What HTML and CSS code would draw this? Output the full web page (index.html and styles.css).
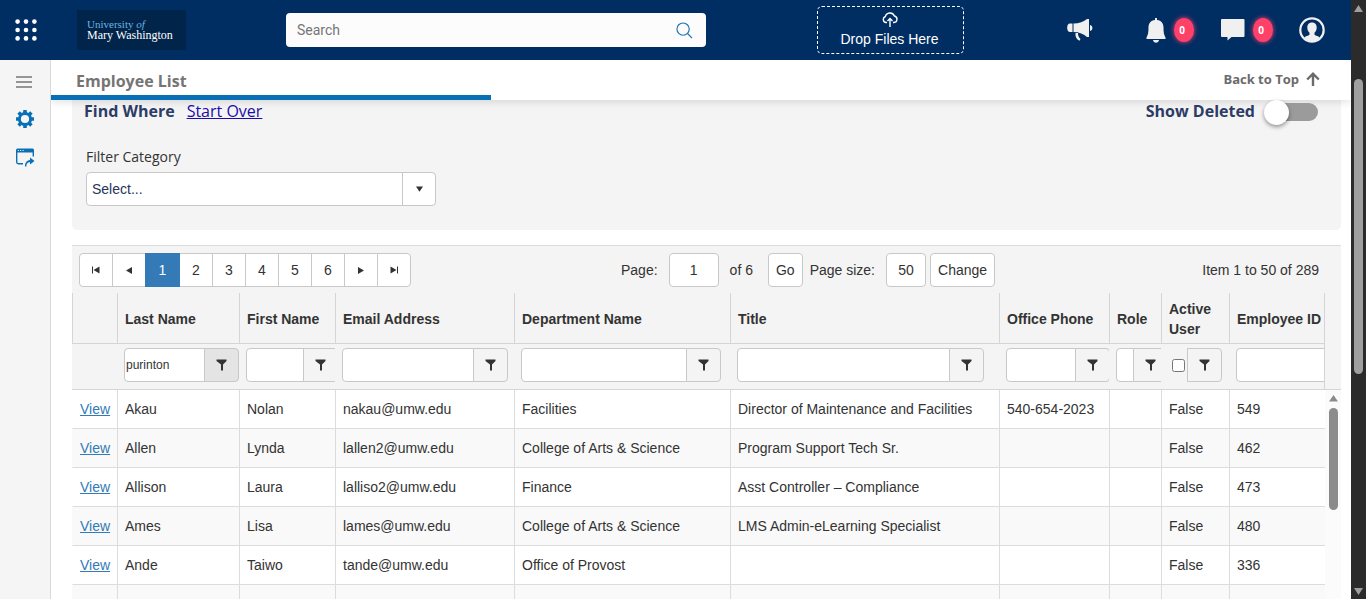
FILE: index.html
```html
<!DOCTYPE html>
<html lang="en">

<head>
    <meta charset="UTF-8">
    <meta name="viewport" content="width=device-width, initial-scale=1.0">
    <title>Employee List</title>

    <link rel="stylesheet" href="styles.css">
</head>

<body>

    <svg class="sprite" aria-hidden="true">
        <symbol id="funnel" viewBox="0 0 12 12">
            <path d="M0.500 0.500h10v1.500L7 5.500v6h-2v-6L0.500 2z" />
        </symbol>
    </svg>

    <div class="app">
        <header class="topbar">
            <button class="icon-btn apps-btn" aria-label="Apps">
                <svg width="22" height="22" viewBox="0 0 22 22" fill="#fff">
                    <circle cx="2.600" cy="2.600" r="2.300" /><circle cx="11" cy="2.600" r="2.300" /><circle cx="19.400" cy="2.600" r="2.300" />
                    <circle cx="2.600" cy="11" r="2.300" /><circle cx="11" cy="11" r="2.300" /><circle cx="19.400" cy="11" r="2.300" />
                    <circle cx="2.600" cy="19.400" r="2.300" /><circle cx="11" cy="19.400" r="2.300" /><circle cx="19.400" cy="19.400" r="2.300" />
                </svg>
            </button>

            <a href="#" class="logo">
                <span class="logo-top">University <i>of</i></span>
                <span>Mary Washington</span>
            </a>

            <div class="search">
                <input type="text" placeholder="Search" aria-label="Search">
                <button class="icon-btn" aria-label="Run search">
                    <svg width="17" height="17" viewBox="0 0 18 18" fill="none" stroke="#1a73b5" stroke-width="1.200">
                        <circle cx="7.500" cy="7.500" r="6.500" />
                        <path d="M12.200 12.200L17 17" />
                    </svg>
                </button>
            </div>

            <button class="drop-files">
                <svg width="16" height="15" viewBox="0 0 16 15" fill="none" stroke="#fff" stroke-width="1.400">
                    <path d="M5 10.500H4A3 3 0 0 1 3.300 4.700A4.800 4.800 0 0 1 12.400 4A3.300 3.300 0 0 1 12 10.500H11" />
                    <path d="M8 15V6.500M5.500 9L8 6.500L10.500 9" />
                </svg>
                <span>Drop Files Here</span>
            </button>

            <div class="actions">
                <button class="icon-btn news" aria-label="Announcements">
                    <svg width="26" height="22" viewBox="0 0 26 22" fill="#f0f0f0">
                        <path d="M3 4.500H5.500v8.500H3C-0.800 13 -0.800 4.500 3 4.500z" />
                        <path d="M6.500 4.500C12 4.500 17 2.500 20 0h2v18H20C17 15 12 13 6.500 13z" />
                        <path d="M23 6C26.200 6.500 26.200 11.500 23 12z" />
                        <path d="M8.500 14h2.500c0 3 0.800 4 2.500 6l-1 1.700C9.500 20.500 8 17.500 8.500 14z" />
                    </svg>
                </button>
                <button class="icon-btn bell" aria-label="Notifications">
                    <svg width="20" height="25" viewBox="0 0 20 25" fill="#f0f0f0">
                        <path d="M9 2V0h2v2c4.500 0.500 6.500 3.500 6.500 7.500c0 5 0.500 7.500 2 10v1.500H0.500v-1.500C2 17 2.500 14.500 2.500 9.500C2.500 5.500 4.500 2.500 9 2z" />
                        <path d="M7 22h6c-0.500 3.600-5.500 3.600-6 0z" />
                    </svg>
                    <span class="badge">0</span>
                </button>
                <button class="icon-btn chat" aria-label="Messages">
                    <svg width="24" height="22" viewBox="0 0 24 22" fill="#f0f0f0">
                        <path d="M1 0h21.500a1 1 0 0 1 1 1v16a1 1 0 0 1-1 1H10.500L6.500 21.500V18H1A1 1 0 0 1 0 17v-16A1 1 0 0 1 1 0z" />
                    </svg>
                    <span class="badge">0</span>
                </button>
                <button class="icon-btn user" aria-label="Profile">
                    <svg width="26" height="26" viewBox="0 0 26 26">
                        <circle cx="13" cy="13" r="11.700" fill="none" stroke="#f0f0f0" stroke-width="2.200" />
                        <path d="M13 5.500c3.200 0 4.700 2.200 4.700 5c0 2.500-1 4.200-2.200 5.200v2c1.500 1 3.700 1.300 5.200 2.800C18.500 23 16 24.500 13 24.500s-5.500-1.500-7.700-4c1.500-1.500 3.700-1.800 5.200-2.800v-2C9.300 14.700 8.300 13 8.300 10.500C8.300 7.700 9.800 5.500 13 5.500z" fill="#f0f0f0" />
                    </svg>
                </button>
            </div>
        </header>

        <div class="layout">
            <nav class="sidebar">
                <button class="icon-btn" aria-label="Menu">
                    <svg width="16" height="12" viewBox="0 0 16 12" stroke="#757575" stroke-width="1.400">
                        <path d="M0 1h16M0 6h16M0 11h16" />
                    </svg>
                </button>
                <a href="#" aria-label="Settings">
                    <svg width="18" height="18" viewBox="0 0 18 18" stroke="#0a70b5">
                        <circle cx="9" cy="9" r="5.600" fill="none" stroke-width="3" />
                        <path d="M9 0v3.500M9 14.500v3.500M0 9h3.500M14.500 9h3.500M2.600 2.600l2.500 2.500M12.900 12.900l2.500 2.500M15.400 2.600l-2.500 2.500M5.100 12.900l-2.500 2.500" stroke-width="3.600" />
                    </svg>
                </a>
                <a href="#" aria-label="Open form">
                    <svg width="19" height="19" viewBox="0 0 19 19" fill="none" stroke="#0a70b5" stroke-width="1.400">
                        <path d="M1.500 0.500h15a1.500 1.500 0 0 1 1.500 1.500V4.500H0V2A1.500 1.500 0 0 1 1.500 0.500z" fill="#0a70b5" stroke="none" />
                        <path d="M1.800 2.500h1M4.200 2.500h1M6.600 2.500h1" stroke="#fff" stroke-width="1" />
                        <path d="M0.700 3.500v10.500a1.700 1.700 0 0 0 1.700 1.700H7M17.300 3.500v5" />
                        <path d="M9 18.500c0-3.500 1.500-6 5-6.500V9.500l4.500 3.500l-4.500 3.500v-2.500c-2.300 0.300-3.700 1.800-3.700 4.500z" fill="#0a70b5" stroke="none" />
                    </svg>
                </a>
            </nav>

            <main class="main">
                <div class="titlebar">
                    <h1>Employee List</h1>
                    <a href="#" class="back-top">Back to Top
                        <svg width="14" height="14" viewBox="0 0 14 14" fill="none" stroke="#6b6b6b" stroke-width="2.400">
                            <path d="M7 14V2M1.200 7.500L7 1.700L12.800 7.500" />
                        </svg>
                    </a>
                </div>

                <section class="filters">
                    <div class="filters-head">
                        <h2>Find Where</h2>
                        <a href="#">Start Over</a>
                        <label class="deleted">Show Deleted <input type="checkbox" class="toggle"></label>
                    </div>
                    <label for="category" class="category-label">Filter Category</label>
                    <div class="combo">
                        <select id="category">
                            <option>Select...</option>
                        </select>
                        <span class="combo-arrow"><svg width="7" height="6" viewBox="0 0 8 6"><path d="M0 0h8L4 6z" fill="#333" /></svg></span>
                    </div>
                </section>

                <section class="grid">
                    <div class="pager">
                        <div class="pages">
                            <button aria-label="First page"><svg width="8" height="8" viewBox="0 0 8 8"><path d="M0 0.500h1v7H0zM7.500 0.500v7L1.500 4z" /></svg></button>
                            <button aria-label="Previous page"><svg width="6" height="7" viewBox="0 0 6 7"><path d="M6 0v7L0 3.500z" /></svg></button>
                            <button class="active">1</button>
                            <button>2</button>
                            <button>3</button>
                            <button>4</button>
                            <button>5</button>
                            <button>6</button>
                            <button aria-label="Next page"><svg width="6" height="7" viewBox="0 0 6 7"><path d="M0 0v7L6 3.500z" /></svg></button>
                            <button aria-label="Last page"><svg width="8" height="8" viewBox="0 0 8 8"><path d="M7 0.500H8v7H7zM0.500 0.500v7L6.500 4z" /></svg></button>
                        </div>
                        <div class="page-tools">
                            <label for="page">Page:</label>
                            <input type="text" id="page" class="page-input" value="1">
                            <span class="page-count">of 6</span>
                            <button>Go</button>
                            <label for="size" class="size-label">Page size:</label>
                            <input type="text" id="size" class="size-input" value="50">
                            <button>Change</button>
                        </div>
                        <span class="page-info">Item 1 to 50 of 289</span>
                    </div>

                    <div class="grid-head">
                        <table>
                            <colgroup>
                                <col class="c-view"><col class="c-last"><col class="c-first"><col class="c-email"><col class="c-dept">
                                <col><col class="c-phone"><col class="c-role"><col class="c-active"><col class="c-id">
                            </colgroup>
                            <thead>
                                <tr>
                                    <th></th>
                                    <th>Last Name</th>
                                    <th>First Name</th>
                                    <th>Email Address</th>
                                    <th>Department Name</th>
                                    <th>Title</th>
                                    <th>Office Phone</th>
                                    <th>Role</th>
                                    <th>Active User</th>
                                    <th>Employee ID</th>
                                </tr>
                                <tr class="filter-row">
                                    <td></td>
                                    <td><div class="filter f-last"><input type="text" value="purinton" aria-label="Filter last name"><button class="on" aria-label="Filter"><svg><use href="#funnel" /></svg></button></div></td>
                                    <td><div class="filter f-first"><input type="text" aria-label="Filter first name"><button aria-label="Filter"><svg><use href="#funnel" /></svg></button></div></td>
                                    <td><div class="filter f-email"><input type="text" aria-label="Filter email"><button aria-label="Filter"><svg><use href="#funnel" /></svg></button></div></td>
                                    <td><div class="filter f-dept"><input type="text" aria-label="Filter department"><button aria-label="Filter"><svg><use href="#funnel" /></svg></button></div></td>
                                    <td><div class="filter f-title"><input type="text" aria-label="Filter title"><button aria-label="Filter"><svg><use href="#funnel" /></svg></button></div></td>
                                    <td><div class="filter f-phone"><input type="text" aria-label="Filter phone"><button aria-label="Filter"><svg><use href="#funnel" /></svg></button></div></td>
                                    <td><div class="filter f-role"><input type="text" aria-label="Filter role"><button aria-label="Filter"><svg><use href="#funnel" /></svg></button></div></td>
                                    <td><div class="filter f-active"><input type="checkbox" aria-label="Filter active user"><button aria-label="Filter"><svg><use href="#funnel" /></svg></button></div></td>
                                    <td><div class="filter f-id"><input type="text" aria-label="Filter employee ID"></div></td>
                                </tr>
                            </thead>
                        </table>
                    </div>

                    <div class="grid-data">
                        <table>
                            <colgroup>
                                <col class="c-view"><col class="c-last"><col class="c-first"><col class="c-email"><col class="c-dept">
                                <col><col class="c-phone"><col class="c-role"><col class="c-active"><col class="c-id">
                            </colgroup>
                            <tbody>
                                <tr>
                                    <td><a href="#">View</a></td><td>Akau</td><td>Nolan</td><td>nakau@umw.edu</td><td>Facilities</td>
                                    <td>Director of Maintenance and Facilities</td><td>540-654-2023</td><td></td><td>False</td><td>549</td>
                                </tr>
                                <tr>
                                    <td><a href="#">View</a></td><td>Allen</td><td>Lynda</td><td>lallen2@umw.edu</td><td>College of Arts &amp; Science</td>
                                    <td>Program Support Tech Sr.</td><td></td><td></td><td>False</td><td>462</td>
                                </tr>
                                <tr>
                                    <td><a href="#">View</a></td><td>Allison</td><td>Laura</td><td>lalliso2@umw.edu</td><td>Finance</td>
                                    <td>Asst Controller – Compliance</td><td></td><td></td><td>False</td><td>473</td>
                                </tr>
                                <tr>
                                    <td><a href="#">View</a></td><td>Ames</td><td>Lisa</td><td>lames@umw.edu</td><td>College of Arts &amp; Science</td>
                                    <td>LMS Admin-eLearning Specialist</td><td></td><td></td><td>False</td><td>480</td>
                                </tr>
                                <tr>
                                    <td><a href="#">View</a></td><td>Ande</td><td>Taiwo</td><td>tande@umw.edu</td><td>Office of Provost</td>
                                    <td></td><td></td><td></td><td>False</td><td>336</td>
                                </tr>
                                <tr>
                                    <td></td><td></td><td></td><td></td><td></td><td></td><td></td><td></td><td></td><td></td>
                                </tr>
                            </tbody>
                        </table>
                        <div class="grid-scroll">
                            <svg width="9" height="7" viewBox="0 0 9 7"><path d="M4.500 0L9 6.500H0z" fill="#8b8b8b" /></svg>
                            <div class="grid-thumb"></div>
                        </div>
                    </div>
                </section>
            </main>
        </div>
    </div>

    <div class="page-scroll">
        <svg width="9" height="7" viewBox="0 0 9 7"><path d="M4.500 0L9 7H0z" fill="#9f9f9f" /></svg>
        <div class="page-track">
            <div class="page-thumb"></div>
        </div>
        <svg width="9" height="7" viewBox="0 0 9 7"><path d="M4.500 7L9 0H0z" fill="#9f9f9f" /></svg>
    </div>

</body>

</html>
```

FILE: styles.css
```css
* {
    box-sizing: border-box;
}

body {
    margin: 0;
    display: flex;
    height: 100vh;
    overflow: hidden;
    font-family: "Liberation Sans", Arial, sans-serif;
    font-size: 14px;
    line-height: 20px;
    color: #333;
    background-color: #fff;
}

button,
input,
select {
    font-family: inherit;
    font-size: 14px;
    color: #333;
}

button {
    cursor: pointer;
}

svg {
    display: block;
    flex-shrink: 0;
}

.sprite {
    display: none;
}

.app {
    flex: 1;
    min-width: 0;
    display: flex;
    flex-direction: column;
}

.icon-btn {
    display: flex;
    align-items: center;
    padding: 0;
    border: none;
    background: none;
}

/* Top bar */
.topbar {
    display: flex;
    align-items: center;
    height: 60px;
    flex-shrink: 0;
    padding: 0 26px 0 15px;
    background-color: #002d62;
}

.logo {
    display: flex;
    flex-direction: column;
    justify-content: center;
    width: 109px;
    height: 40px;
    margin-left: 40px;
    padding-left: 10px;
    background-color: #01244b;
    font-family: "Liberation Serif", "Times New Roman", serif;
    font-size: 12px;
    line-height: 11px;
    color: #fff;
    text-decoration: none;
    white-space: nowrap;
}

.logo-top {
    font-size: 11px;
    color: #6db3e0;
}

.search {
    display: flex;
    align-items: center;
    width: 420px;
    height: 34px;
    margin-left: 100px;
    padding: 0 13px 0 11px;
    border-radius: 4px;
    background-color: #fcfcfc;
}

.search input {
    flex: 1;
    padding: 0;
    border: none;
    outline: none;
    background: none;
    font-family: Roboto, sans-serif;
}

.search input::placeholder {
    color: #757575;
}

.drop-files {
    display: flex;
    flex-direction: column;
    align-items: center;
    width: 147px;
    height: 48px;
    margin-left: 111px;
    padding: 5px 2px 0 0;
    border: 1px dashed #fff;
    border-radius: 5px;
    background: none;
    color: #fff;
}

.drop-files span {
    line-height: 24px;
}

.actions {
    display: flex;
    align-items: center;
    margin-left: auto;
}

.news,
.bell {
    margin-right: 1px;
}

.bell {
    margin-left: 52px;
}

.chat,
.user {
    margin-left: 26px;
}

.badge {
    width: 20px;
    height: 24px;
    margin-left: 8px;
    padding-right: 4px;
    border-radius: 50%;
    background-color: #ff4069;
    box-shadow: 0 0 5px #ff4069;
    color: #fff;
    font-family: "Open Sans", sans-serif;
    font-size: 10px;
    font-weight: bold;
    line-height: 24px;
    text-align: center;
}

/* Side menu */
.layout {
    flex: 1;
    min-height: 0;
    display: flex;
}

.sidebar {
    display: flex;
    flex-direction: column;
    gap: 20px;
    width: 51px;
    padding: 16px 0 0 16px;
    border-right: 1px solid #d9d9d9;
    background-color: #f5f5f5;
}

.sidebar .icon-btn {
    padding-bottom: 2px;
}

.main {
    flex: 1;
    min-width: 0;
    overflow: hidden;
}

/* Title bar */
.titlebar {
    position: relative;
    display: flex;
    justify-content: space-between;
    height: 40px;
    padding-right: 31px;
    background-color: #fff;
    box-shadow: 0 2px 8px rgba(0, 0, 0, 0.12);
    font-family: "Open Sans", sans-serif;
}

h1 {
    width: 440px;
    margin: 0;
    padding: 10px 0 0 25px;
    border-bottom: 5px solid #0a70b5;
    font-size: 16px;
    line-height: 22px;
    color: #757575;
}

.back-top {
    display: flex;
    align-items: center;
    gap: 7px;
    padding-bottom: 2px;
    font-size: 13px;
    font-weight: bold;
    color: #6b6b6b;
    text-decoration: none;
}

/* Filter panel */
.filters {
    margin: 0 10px 15px 21px;
    padding: 0 23px 24px 14px;
    border-radius: 0 0 5px 5px;
    background-color: #f4f4f4;
    font-family: "Open Sans", sans-serif;
}

.filters-head {
    display: flex;
    gap: 12px;
    margin-left: -2px;
    margin-bottom: 25px;
    font-size: 16px;
    line-height: 22px;
}

.filters-head a {
    color: #1a0dab;
}

h2 {
    margin: 0;
    font-size: 16px;
    color: #2c3c66;
}

.deleted {
    display: flex;
    gap: 18px;
    margin-left: auto;
    font-weight: bold;
    color: #2c3c66;
}

.toggle {
    appearance: none;
    position: relative;
    width: 45px;
    height: 18px;
    margin: 3px 0 0;
    border-radius: 9px;
    background-color: #9b9b9b;
}

.toggle::before {
    content: "";
    position: absolute;
    left: -9px;
    top: -3px;
    width: 25px;
    height: 25px;
    border-radius: 50%;
    background-color: #fff;
    box-shadow: 0 2px 4px rgba(0, 0, 0, 0.4);
}

.category-label {
    display: block;
    margin-bottom: 5px;
}

.combo {
    display: flex;
    width: 350px;
    height: 34px;
    border: 1px solid #c8c8c8;
    border-radius: 4px;
    background-color: #fff;
}

.combo select {
    flex: 1;
    appearance: none;
    padding: 0 5px;
    border: none;
    background: none;
    font-family: "Liberation Sans", Arial, sans-serif;
    color: #26355c;
}

.combo-arrow {
    display: flex;
    align-items: center;
    justify-content: center;
    width: 33px;
    border-left: 1px solid #c8c8c8;
}

/* Pager */
.grid {
    margin: 0 10px 0 21px;
    border-top: 1px solid #dcdcdc;
}

.pager {
    display: flex;
    align-items: center;
    padding: 7px 22px 6px 7px;
    background-color: #f4f4f4;
    white-space: nowrap;
}

.pages,
.page-tools {
    display: flex;
    align-items: center;
}

.pages button {
    display: flex;
    align-items: center;
    justify-content: center;
    width: 34px;
    height: 34px;
    margin-right: -1px;
    padding: 0;
    border: 1px solid #c8c8c8;
    background-color: #fff;
}

.pages svg {
    fill: #333;
}

.pages button:first-child {
    border-radius: 4px 0 0 4px;
}

.pages button:last-child {
    border-radius: 0 4px 4px 0;
}

.pages .active {
    z-index: 1;
    width: 35px;
    border-color: #337ab7;
    background-color: #337ab7;
    color: #fff;
}

.page-tools {
    margin-left: 211px;
}

.page-tools input,
.page-tools button {
    height: 34px;
    padding: 0 7px;
    border: 1px solid #c8c8c8;
    border-radius: 4px;
    background-color: #fff;
    text-align: center;
}

.page-tools .page-input {
    width: 50px;
    margin: 0 11px;
}

.page-count {
    margin-right: 15px;
}

.page-tools .size-label {
    margin: 0 11px 0 7px;
}

.page-tools .size-input {
    width: 40px;
    margin-right: 4px;
}

.page-info {
    margin-left: auto;
}

/* Employee table */
table {
    width: 100%;
    table-layout: fixed;
    border-collapse: separate;
    border-spacing: 0;
}

.c-view {
    width: 45px;
}

.c-last {
    width: 122px;
}

.c-first {
    width: 96px;
}

.c-email {
    width: 179px;
}

.c-dept {
    width: 216px;
}

.c-phone {
    width: 110px;
}

.c-role {
    width: 52px;
}

.c-active {
    width: 68px;
}

.c-id {
    width: 96px;
}

.grid-head {
    padding-right: 16px;
    border-bottom: 1px solid #d5d5d5;
    background-color: #f4f4f4;
}

.grid-head th {
    height: 51px;
    padding: 6px 0 4px 7px;
    border-left: 1px solid #d5d5d5;
    border-bottom: 1px solid #d5d5d5;
    text-align: left;
}

.grid-head th:last-child,
.filter-row td:last-child {
    border-right: 1px solid #d5d5d5;
}

.filter-row td {
    padding: 4px 0 7px 7px;
    overflow: hidden;
}

.filter {
    display: flex;
    height: 34px;
}

.filter input[type="text"] {
    flex-shrink: 0;
    width: 100%;
    padding: 0 1px;
    border: 1px solid #c8c8c8;
    border-radius: 4px 0 0 4px;
    background-color: #fff;
    font-size: 12px;
}

.filter button {
    display: flex;
    align-items: center;
    justify-content: center;
    flex-shrink: 0;
    width: 35px;
    margin-left: -1px;
    padding: 0;
    border: 1px solid #c8c8c8;
    border-radius: 0 4px 4px 0;
    background-color: #f4f4f4;
}

.filter .on {
    background-color: #e4e4e4;
}

.filter svg {
    width: 12px;
    height: 12px;
    fill: #333;
}

.f-last input[type="text"] {
    width: 81px;
}

.f-first input[type="text"] {
    width: 58px;
}

.f-email input[type="text"] {
    width: 132px;
}

.f-dept input[type="text"] {
    width: 166px;
}

.f-title input[type="text"] {
    width: 213px;
}

.f-phone input[type="text"] {
    width: 70px;
}

.f-role input[type="text"] {
    width: 18px;
}

.f-id input[type="text"] {
    width: 120px;
}

.f-active {
    align-items: center;
}

.f-active input {
    width: 13px;
    height: 13px;
    margin: 0 2px 0 4px;
}

.f-active button {
    height: 34px;
    margin-left: 0;
}

.grid-data {
    display: flex;
}

.grid-data table {
    flex: 1;
}

.grid-data td {
    height: 39px;
    padding: 0 0 0 7px;
    border-left: 1px solid #dcdcdc;
    border-bottom: 1px solid #dcdcdc;
    white-space: nowrap;
}

.grid-data td:first-child {
    border-left-color: transparent;
}

.grid-data tr:nth-child(even) {
    background-color: #f9f9f9;
}

.grid-data a {
    color: #337ab7;
}

.grid-scroll {
    display: flex;
    flex-direction: column;
    align-items: center;
    gap: 6px;
    width: 16px;
    padding-top: 5px;
    background-color: #fbfbfb;
}

.grid-thumb {
    width: 9px;
    height: 102px;
    border-radius: 5px;
    background-color: #8b8b8b;
}

/* Page scrollbar */
.page-scroll {
    display: flex;
    flex-direction: column;
    align-items: center;
    width: 15px;
    padding: 5px 0 4px;
    background-color: #2b2b2b;
}

.page-track {
    flex: 1;
    padding-top: 67px;
}

.page-thumb {
    width: 9px;
    height: 58%;
    border-radius: 5px;
    background-color: #9f9f9f;
}
```
